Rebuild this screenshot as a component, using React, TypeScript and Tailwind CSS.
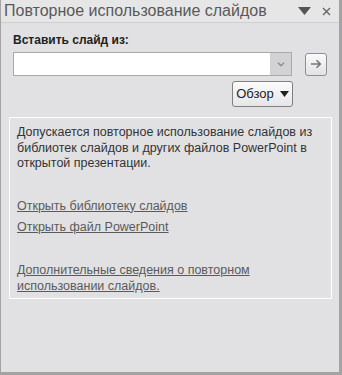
export default function App() {
  const font = { fontFamily: "'Liberation Sans', Arial, sans-serif" };
  return (
    <div
      className="w-[342px] h-[375px] bg-[#e1e1e3] border-l border-r-[3px] border-b-[3px] border-[#a3a3a3] flex flex-col text-[#333]"
      style={font}
    >
      {/* title bar */}
      <div className="h-[23px] flex items-center justify-between pl-[3px] pr-[8px] bg-[#e6e6e7] border-b border-[#cfcfd1]">
        <span className="text-[16px] leading-none text-[#595959] whitespace-nowrap">
          Повторное использование слайдов
        </span>
        <div className="flex items-center gap-[11px] text-[#666]">
          <svg width="13" height="8" viewBox="0 0 13 8">
            <path d="M0 0h13L6.5 8z" fill="#555" />
          </svg>
          <svg width="9" height="9" viewBox="0 0 9 9">
            <path d="M1 1l7 7M8 1L1 8" stroke="#666" strokeWidth="1.4" />
          </svg>
        </div>
      </div>

      <div className="px-[12px] pt-[9px]">
        <div className="text-[12px] font-bold text-[#222] leading-[16px]">Вставить слайд из:</div>
        <div className="flex items-center mt-[4px] gap-[13px]">
          <div className="w-[284px] h-[24px] bg-white border border-[#a9a9ab] flex justify-end">
            <div className="w-[21px] h-full bg-[#d2d2d4] flex items-center justify-center">
              <svg width="8" height="5" viewBox="0 0 8 5">
                <path d="M1 0.8l3 3 3-3" stroke="#8a8a8a" strokeWidth="1.3" fill="none" />
              </svg>
            </div>
          </div>
          <div className="w-[22px] h-[23px] rounded-[3px] border border-[#8f8f91] bg-gradient-to-b from-[#fafafa] to-[#e2e2e4] flex items-center justify-center">
            <svg width="12" height="10" viewBox="0 0 12 10">
              <path d="M1 5h9M6.5 1.3L10.3 5 6.5 8.7" stroke="#777" strokeWidth="1.6" fill="none" />
            </svg>
          </div>
        </div>
        <div className="flex justify-end pr-[34px] mt-[5px]">
          <div className="h-[26px] w-[61px] rounded-[3px] border border-[#7f7f81] bg-gradient-to-b from-[#fbfbfb] to-[#e6e6e8] flex items-center justify-center gap-[6px] text-[13px] text-[#222]">
            <span>Обзор</span>
            <svg width="9" height="6" viewBox="0 0 9 6">
              <path d="M0 0h9L4.5 6z" fill="#222" />
            </svg>
          </div>
        </div>
      </div>

      <div className="mx-[8px] mt-[10px] w-[323px] h-[182px] border border-white px-[7px] pt-[7px] text-[12.5px] leading-[15.5px] whitespace-nowrap">
        <p className="text-[#333]">
          Допускается повторное использование слайдов из
          <br />
          библиотек слайдов и других файлов PowerPoint в
          <br />
          открытой презентации.
        </p>
        <div className="mt-[26px] flex flex-col gap-[5px] text-[#5a5a5a] leading-[16px]">
          <span className="underline">Открыть библиотеку слайдов</span>
          <span className="underline">Открыть файл PowerPoint</span>
        </div>
        <p className="mt-[27px] text-[#5a5a5a] underline leading-[16px]">
          Дополнительные сведения о повторном
          <br />
          использовании слайдов.
        </p>
      </div>
    </div>
  );
}
